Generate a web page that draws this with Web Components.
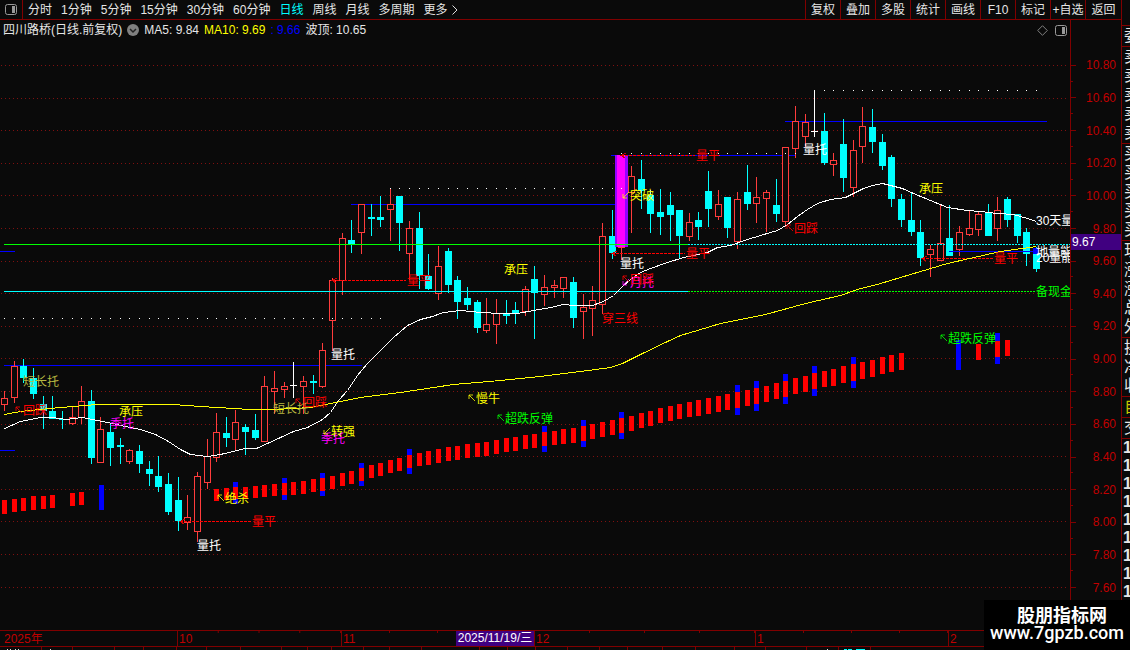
<!DOCTYPE html>
<html lang="zh-CN">
<head>
<meta charset="utf-8">
<title>四川路桥 日线</title>
<style>
html,body{margin:0;height:100%;background:#0a0a0a;overflow:hidden}
body{font:12px/16px "Liberation Sans","Noto Sans CJK SC",sans-serif;color:#e6e6e6;--line:#800000;--axis:#c00000;--bg:#0a0a0a;--tag:#400080}
</style>
</head>
<body>
<stock-app></stock-app>
<script>
const define = (name, html, setup) => customElements.define(name, class extends HTMLElement {
  constructor() {
    super();
    const t = document.createElement('template');
    t.innerHTML = html;
    this.attachShadow({mode: 'open'}).append(t.content.cloneNode(true));
    if (setup) setup(this.shadowRoot);
  }
});

define('period-bar', `
<style>
:host{display:flex;height:19px;border-bottom:1px solid var(--line)}
button{font:inherit;color:inherit;background:none;border:0;padding:0;margin:0;white-space:nowrap}
.pane{width:23px;border-right:1px solid var(--line);display:flex;align-items:center;justify-content:center}
nav{display:flex;gap:9px;padding-left:5px;flex:1}
nav button[aria-pressed=true]{color:#0ff}
.more{display:flex;align-items:center;gap:4px}
.tools{display:flex}
.tools button{width:35px;border-left:1px solid var(--line);text-align:center}
.tools button:last-child{width:36px}
</style>
<button class="pane" aria-label="侧栏"><svg width="12" height="11"><rect x=".5" y=".5" width="11" height="10" rx="2" fill="none" stroke="#999"/><rect x="7" y="2" width="3" height="7" fill="#999"/></svg></button>
<nav></nav><div class="tools"></div>`, root => {
  const nav = root.querySelector('nav');
  for (const p of ['分时','1分钟','5分钟','15分钟','30分钟','60分钟','日线','周线','月线','多周期']) {
    const b = document.createElement('button');
    b.textContent = p; b.setAttribute('aria-pressed', p === '日线');
    nav.append(b);
  }
  nav.insertAdjacentHTML('beforeend', '<button class="more">更多<svg width="6" height="10"><path d="M.5 .5L5 5L.5 9.5" fill="none" stroke="#ddd"/></svg></button>');
  root.querySelector('.tools').innerHTML = ['复权','叠加','多股','统计','画线','F10','标记','+自选','返回'].map(s => `<button>${s}</button>`).join('');
});

define('chart-legend', `
<style>
:host{display:flex;align-items:center;box-sizing:border-box;height:18px;padding:2px 3px 0;gap:5px;white-space:nowrap}
.y{color:#ff0}.b{color:#00f}.end{margin-left:auto;display:flex;align-items:center;gap:7px}
svg{display:block}
</style>
<span>四川路桥(日线.前复权)</span>
<svg width="12" height="12"><circle cx="6" cy="6" r="6" fill="#808080"/><path d="M3 5l3 3 3-3" fill="none" stroke="#222" stroke-width="1.5"/></svg>
<span>MA5: 9.84</span><span class="y">MA10: 9.69</span><span class="b">: 9.66</span><span>波顶: 10.65</span>
<span class="end"><svg width="11" height="11"><path d="M5.500 .7L10.300 5.500L5.500 10.300L.7 5.500Z" fill="none" stroke="#808080"/></svg><svg width="12" height="11"><rect x=".5" y=".5" width="11" height="10" rx="2" fill="none" stroke="#999"/><rect x="7" y="2" width="3" height="7" fill="#999"/></svg></span>`);

/* Each candle: type, high, body top, body bottom, low. r = up, c = down, w = doji */
const CANDLES = `r391 398 404 411,r361 366 397 403,c359 366 378 383,c368 378 394 399,c396 404 411 429,c396 411 419 419,c411 419 420 429,r407 417 423 425,r386 401 417 424,c390 401 458 464,r417 429 462 462,c424 432 448 466,c438 445 447 464,r449 450 461 464,c445 451 464 473,c461 469 474 486,c456 476 487 492,c473 484 512 515,c477 500 521 531,r495 517 522 530,r472 476 531 542,r439 456 482 489,r413 432 457 462,c417 433 438 447,r410 422 439 451,c424 427 432 455,c414 430 438 440,r376 386 441 441,r371 388 391 414,r382 386 389 398,w362 385 385 398,r376 381 386 414,c375 381 383 394,r343 350 386 388,r278 280 320 351,r233 238 280 295,c220 240 244 253,r204 204 232 254,c204 217 219 236,c196 217 220 227,r189 204 209 241,c196 196 223 251,r221 228 253 280,c212 228 276 289,c254 276 289 290,r246 266 293 300,c248 251 285 293,c276 280 302 319,c287 298 305 310,c300 302 328 333,r298 324 330 333,r299 313 324 344,c300 314 316 324,c302 310 313 324,r286 289 311 316,c266 279 293 339,r275 287 294 306,r280 285 287 298,r277 277 288 298,c277 282 318 328,r294 307 311 339,r286 300 308 336,r223 236 304 314,c210 236 253 259,r155 155 247 260,r166 176 192 233,c160 179 191 209,c190 195 214 233,c189 212 217 235,c192 205 215 241,c210 210 236 258,r213 222 236 241,c212 220 227 240,c171 191 209 227,r190 204 216 220,c197 197 228 238,r192 199 241 249,c165 192 204 210,r177 197 203 223,r190 192 198 232,c179 205 214 222,r147 147 221 227,r106 121 148 158,r114 122 136 147,w90 131 131 137,c113 131 163 165,r153 160 164 176,c119 144 178 192,r140 150 187 197,r107 126 146 163,c109 127 142 153,c134 142 166 170,c155 157 199 207,c194 199 220 227,c192 220 232 236,c220 232 258 266,r245 249 254 277,r205 243 260 260,c205 238 256 256,r226 232 249 256,r211 228 234 236,r212 214 229 236,c204 212 236 236,r197 210 228 241,c197 199 220 227,c214 214 236 243,c228 232 254 266,c247 253 269 272`.split(',');
const MA_WHITE = '4,428 20,421 40,417 52,417 66,419 82,417 97,420 112,423 125,426 140,429 155,434 168,441 180,449 190,454 207,456 220,454 245,448 256,448 280,437 293,431 307,427 322,419 330,412 338,400 347,390 357,375 367,363 380,350 393,337 407,325 420,319 432,316 443,312 460,310 480,312 500,313 517,313 533,310 550,307 563,304 573,305 592,305 603,301 613,295 622,286 630,279 640,272 650,268 667,262 683,257 707,252 717,247 730,245 747,239 760,235 777,230 787,224 797,216 807,209 817,203 830,199 845,197 863,188 872,185 882,183 890,185 902,188 913,193 930,200 947,207 967,210 980,211 997,213 1013,214 1027,218 1036,221';
const MA_YELLOW = '4,414 20,411 60,407 97,404 173,404 200,406 250,409 275,409 310,407 340,401 360,397 400,392 453,384 500,380 540,376 580,371 610,367 622,363 640,354 667,341 680,335 697,330 720,323 765,314 805,303 840,295 857,289 880,283 900,277 947,263 1000,251 1036,246';
/* Text, x, vertical centre, colour, arrow direction */
const LABELS = [['短长托',23,381,'#b8b840'],['回踩',23,410,'#f00','ul'],['承压',119,411,'#ff0'],['季托',110,423,'#f0f'],['绝杀',225,498,'#ff0','ul'],['量平',252,521,'#f00'],['量托',197,545,'#fff'],['短长托',273,408,'#b8b840'],['回踩',303,402,'#f00','ul'],['量托',331,354,'#fff'],['季托',321,438,'#f0f'],['转强',331,431,'#ff0','dl'],['量平',407,280,'#f00'],['承压',504,269,'#ff0'],['慢牛',476,398,'#ff0','ul'],['超跌反弹',505,418,'#0f0','ul'],['穿三线',602,318,'#f00'],['量托',620,263,'#fff'],['月托',630,282,'#f0f','dl'],['回踩',630,279,'#f00','ul'],['突破',630,195,'#ff0','dl'],['量平',696,155,'#f00'],['量平',686,253,'#f00'],['回踩',794,228,'#f00','ul'],['量托',803,149,'#fff'],['承压',919,188,'#ff0'],['量平',994,258,'#f00'],['超跌反弹',948,338,'#0f0','ul'],['30天量',1036,220,'#fff'],['地量能',1036,251,'#fff'],['20量能',1036,257,'#fff'],['备现金',1036,291,'#0f0']];
const cx = i => Math.round(4 + 9.645 * i);

define('kline-chart', `
<style>
:host{display:block;min-width:0;min-height:0;overflow:hidden}
svg{display:block;width:100%;height:100%}
text{font:12px "Liberation Sans","Noto Sans CJK SC",sans-serif}
</style>
<svg viewBox="0 38 1070 592" preserveAspectRatio="xMinYMin meet" role="img" aria-label="日K线图"></svg>`, root => {
  const o = [];
  const rect = (x, y, w, h, f) => o.push(`<rect x="${x}" y="${y}" width="${w}" height="${h}" fill="${f}"/>`);
  const line = (x1, y, x2, c, dash = '') => o.push(`<path d="M${x1} ${y}.5H${x2}" stroke="${c}" ${dash && `stroke-dasharray="${dash}"`}/>`);
  for (let k = 0; k < 17; k++) line(1, Math.round(65 + k * 32.600), 1068, '#801010', '1 3');
  line(4, 365, 362, '#00f'); line(351, 204, 616, '#00f'); line(611, 155, 796, '#00f');
  line(785, 121, 1047, '#00f'); line(0, 251, 15, '#00f'); line(0, 450, 15, '#00f');
  const keys = [[22,489],[27,485],[29,483],[33,478],[37,468],[42,455],[46,447],[49,443],[51,440],[56,432],[60,426],[64,418],[69,406],[73,398],[78,388],[81,381],[84,373],[88,364],[93,353]];
  const blue = new Set([24,29,33,37,42,56,60,64,76,78,81,84,88]);
  [[0,500,14],[1,499,13],[2,498,13],[3,496,14],[4,496,13],[5,495,13],[7,493,13],[8,492,13]].forEach(([i,y,h]) => rect(cx(i) - 2, y, 5, h, '#f00'));
  for (let i = 22; i < 94; i++) {
    const k = Math.max(0, keys.findIndex(p => p[0] >= i) - 1), [a, ya] = keys[k], [b, yb] = keys[k + 1];
    const y = Math.round(ya + (yb - ya) * (i - a) / (b - a)), h = Math.round(12 + (i - 22) * 5 / 71);
    if (blue.has(i)) { const e = i < 40 ? 5 : i < 70 ? 6 : 7; rect(cx(i) - 2, y - e, 5, h + 2 * e, '#00f'); }
    rect(cx(i) - 2, y, 5, h, '#f00');
  }
  rect(99, 485, 5, 25, '#00f'); rect(956, 340, 5, 30, '#00f'); rect(976, 344, 5, 16, '#f00');
  rect(995, 333, 5, 31, '#00f'); rect(995, 341, 5, 16, '#f00'); rect(1005, 340, 5, 16, '#f00');
  CANDLES.forEach((s, i) => {
    const [h, t, b, l] = s.slice(1).split(' ').map(Number), x = cx(i);
    const c = {r: '#ff3c3c', c: '#0ff', w: '#fff'}[s[0]];
    rect(x, h, 1, l - h, c);
    if (s[0] === 'r') o.push(`<rect x="${x - 2.5}" y="${t + .5}" width="6" height="${b - t}" fill="#0a0a0a" stroke="${c}"/>`);
    else rect(x - 3, t, 7, Math.max(1, b - t), c);
  });
  rect(615, 155, 13, 92, '#9600ff'); rect(617, 155, 8, 92, '#f0f');
  line(4, 244, 688, '#0f0'); line(688, 244, 1070, '#0ff', '2 1');
  line(4, 291, 688, '#0ff'); line(688, 291, 1036, '#0f0', '2 1');
  line(949, 251, 1036, '#00f');
  [[0,39,318],[40,64,188],[64,82,153],[84,107,90]].forEach(([a, b, y]) => { for (let i = a; i <= b; i++) rect(cx(i), y, 1, 1, '#fff'); });
  [[180,252,521],[332,406,280],[621,695,155],[612,685,253],[922,994,258]].forEach(([a, b, y]) => {
    line(a, y, b, '#f00', '3 1');
    o.push(`<path d="M${a + 5} ${y - 2}L${a} ${y + .5}L${a + 4} ${y + 3}" fill="none" stroke="#c00"/>`);
  });
  for (const [p, c] of [[MA_WHITE, '#fff'], [MA_YELLOW, '#ff0']]) o.push(`<polyline points="${p}" transform="translate(.5 .5)" fill="none" stroke="${c}"/>`);
  o.push('<circle cx="1036" cy="251" r="3.500" fill="#00f"/>');
  const art = `<g shape-rendering="crispEdges">${o.join('')}</g>`;
  const words = LABELS.map(([s, x, y, c, d]) => {
    const a = x - 7, arrow = d === 'ul' ? `M${a} ${y + 1}V${y - 3}H${a + 4}M${a} ${y - 3}L${a + 6} ${y + 3}`
      : d === 'dl' ? `M${a} ${y - 1}V${y + 3}H${a + 4}M${a} ${y + 3}L${a + 6} ${y - 3}` : '';
    return (arrow && `<path d="${arrow}" fill="none" stroke="${c}" opacity=".8"/>`) + `<text x="${x}" y="${y + 5}" fill="${c}">${s}</text>`;
  }).join('');
  root.querySelector('svg').innerHTML = art + words;
});

define('price-axis', `
<style>
:host{display:flex;flex-direction:column;box-sizing:border-box;width:51px;border-left:1px solid var(--line);padding:29px 0 26px;position:relative;color:var(--axis)}
.row{flex:1;display:flex;align-items:center;position:relative;min-height:0}
.row::before{content:"";width:5px;height:1px;background:var(--line)}
.row:not(:last-of-type)::after{content:"";position:absolute;left:0;bottom:0;width:2px;height:1px;background:var(--line)}
.row span{margin-left:auto;padding-right:5px}
.now{position:absolute;left:0;right:0;top:214px;height:16px;background:var(--tag);color:#fff;padding-left:1px}
</style>`, root => {
  for (let p = 1080; p >= 760; p -= 20) root.append(Object.assign(document.createElement('div'), {className: 'row', innerHTML: `<span>${(p / 100).toFixed(2)}</span>`}));
  root.append(Object.assign(document.createElement('output'), {className: 'now', textContent: '9.67'}));
});

define('date-axis', `
<style>
:host{display:grid;grid-template-columns:177px 164px 193px 221px 193px 1fr;height:15px;border:solid var(--line);border-width:1px 0;color:var(--axis)}
div{position:relative;padding-left:1px;border-left:1px solid var(--line);background:linear-gradient(90deg,transparent calc(100% - 1px),var(--line) 0) 0 0/25% 2px repeat-x}
div:first-of-type{padding-left:4px;border-left:0;background:none}
div:last-of-type{background:none}
.pick{position:absolute;right:0;top:0;height:15px;width:78px;line-height:14px;background:var(--tag);color:#fff;white-space:nowrap;text-align:center}
</style>
<div>2025年</div><div>10</div><div>11<time class="pick" datetime="2025-11-19">2025/11/19/三</time></div><div>12</div><div>1</div><div>2</div>`);

define('indicator-tabs', `
<style>:host{display:flex;height:3px;overflow:hidden}i{box-sizing:border-box;border-right:1px solid var(--line);height:3px}svg{display:block;margin-left:auto}</style>`, root => {
  [42,31,42,29,33,30,34,41,26,24,32,26,32,58,28,28,32,32,28,35,33,39,31,41,32,32].forEach((w, n) => {
    const c = document.createElement('i'); c.style.width = w + 'px';
    if (n === 0) c.innerHTML = '<svg width="34" height="3"><path d="M0 2.500h1m2 0h1m4 0h1m2 0h1" stroke="#ddd"/></svg>';
    if (n === 1) c.innerHTML = '<svg width="23" height="3"><path d="M1 2.500h1" stroke="#ddd"/></svg>';
    if (n === 24) c.innerHTML = '<svg width="12" height="3"><path d="M1 2.500h1" stroke="#ddd"/></svg>';
    if (n === 25) c.innerHTML = '<svg width="26" height="3"><path d="M0 2.500h3m1 0h4m4 0h9" stroke="#0ff"/></svg>';
    root.append(c);
  });
});

define('quote-rail', `
<style>
:host{display:block;border-left:1px solid var(--line);width:8px;overflow:hidden;font-size:16px;line-height:19px}
section{border-bottom:1px solid var(--line);padding:0 0 1px 2px;width:32px}
section:empty{height:24px}
.y{color:#c8c800}
.n{border:0;font-weight:bold;line-height:18px;padding-left:1px}
</style>`, root => {
  const groups = ['', '委', '卖卖卖卖卖', '买买买买买', '现涨涨总外', '换净收', '自', '交', '111111111'];
  groups.forEach((g, n) => {
    const s = document.createElement('section');
    if (n === 6) s.className = 'y';
    if (n === 8) s.className = 'n';
    for (const ch of g) s.append(Object.assign(document.createElement('div'), {textContent: ch}));
    root.append(s);
  });
});

define('site-mark', `
<style>
:host{position:absolute;right:0;bottom:0;width:146px;height:50px;background:#000;color:#fff;text-align:center;white-space:nowrap}
b{display:block;padding:4px 0 0 10px;font:bold 18px/20px "Noto Sans CJK SC",sans-serif}
span{display:block;font:500 18px/18px Roboto,sans-serif}
</style><b>股朋指标网</b><span>www.7gpzb.com</span>`);

define('stock-app', `
<style>
:host{display:grid;grid-template-columns:minmax(0,1fr) auto;height:100vh;position:relative;overflow:hidden}
main{display:grid;grid-template-rows:auto minmax(0,1fr) auto auto;min-width:0}
.body{display:grid;grid-template-columns:minmax(0,1fr) auto;min-height:0}
.plot{display:grid;grid-template-rows:auto minmax(0,1fr);min-width:0;min-height:0}
</style>
<main>
<period-bar></period-bar>
<div class="body"><div class="plot"><chart-legend></chart-legend><kline-chart></kline-chart></div><price-axis></price-axis></div>
<date-axis></date-axis>
<indicator-tabs></indicator-tabs>
</main>
<quote-rail></quote-rail>
<site-mark></site-mark>`);
</script>
</body>
</html>
